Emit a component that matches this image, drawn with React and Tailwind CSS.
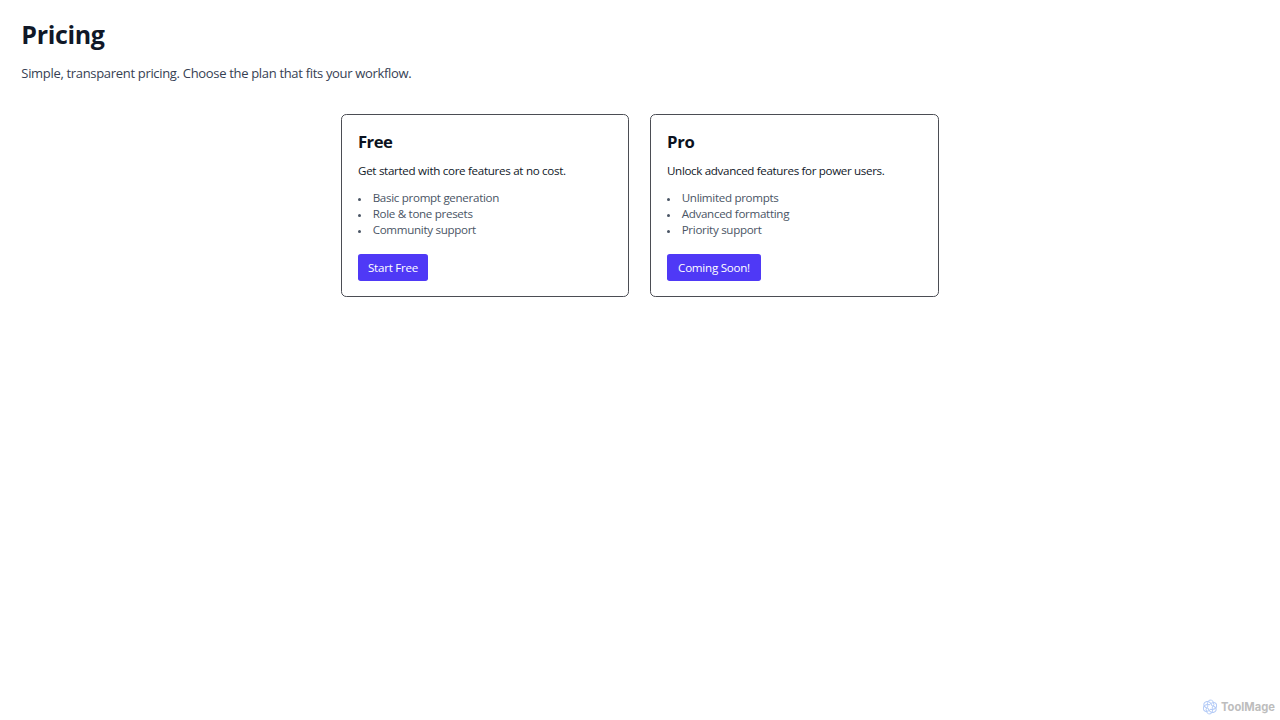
const plans = [
  {
    name: "Free",
    nameClass: "tracking-[-0.55px]",
    textClass: "tracking-[-0.3px]",
    description: "Get started with core features at no cost.",
    features: ["Basic prompt generation", "Role & tone presets", "Community support"],
    action: "Start Free",
    width: "w-[70px]",
  },
  {
    name: "Pro",
    nameClass: "tracking-[-0.3px]",
    textClass: "tracking-[-0.34px]",
    description: "Unlock advanced features for power users.",
    features: ["Unlimited prompts", "Advanced formatting", "Priority support"],
    action: "Coming Soon!",
    width: "w-[94px]",
  },
];

function PlanCard({ plan }) {
  return (
    <section className="flex h-[183px] flex-col items-start rounded-[5.33px] border border-[#4b4d54] px-4 pt-4">
      <h2 className={"h-[21px] text-[16.7px] leading-[22px] font-bold text-[#0b1220] " + plan.nameClass}>{plan.name}</h2>
      <p className={"mt-[11px] h-4 text-[11.6px] leading-4 whitespace-nowrap text-[#101828] " + plan.textClass}>{plan.description}</p>
      <ul className="mt-[11px] text-[11.6px] leading-4 tracking-[-0.31px] text-[#4a5565]">
        {plan.features.map((feature) => (
          <li key={feature} className="flex h-4 items-center whitespace-nowrap">
            <span className="mt-[3px] mr-[11.7px] h-[3px] w-[3px] rounded-full bg-[#4a5565]" />
            {feature}
          </li>
        ))}
      </ul>
      <button className={"mt-4 flex h-[26.67px] items-center justify-center rounded-[2.67px] bg-[#4f39f6] text-[11.6px] leading-4 tracking-[-0.25px] whitespace-nowrap text-white " + plan.width}>
        {plan.action}
      </button>
    </section>
  );
}

function Logo() {
  return (
    <svg viewBox="0 0 16 16" className="h-4 w-4" fill="none" stroke="#b4cbf7" strokeWidth="1">
      {[0, 60, 120, 180, 240, 300].map((angle) => (
        <path key={angle} d="M5.2 3.1 Q8 -.6 11 2.3 Q13.4 5.2 9.9 9.2 M8 5.4 Q9 3.6 11.3 3.7" transform={`rotate(${angle} 8 8)`} />
      ))}
    </svg>
  );
}

export default function App() {
  return (
    <div className="flex h-screen flex-col bg-white font-['Open_Sans','Noto_Sans',sans-serif]">
      <main className="grow px-[21.33px] pt-[21.33px]">
        <h1 className="h-[27px] text-[25px] leading-[27px] font-bold tracking-[-0.35px] text-[#101828]">Pricing</h1>
        <p className="mt-4 h-[18px] text-[13px] leading-[18px] tracking-[-0.32px] whitespace-nowrap text-[#364153]">
          Simple, transparent pricing. Choose the plan that fits your workflow.
        </p>
        <div className="mx-auto mt-8 grid w-[598px] grid-cols-[288px_289px] gap-[21px]">
          {plans.map((plan) => (
            <PlanCard key={plan.name} plan={plan} />
          ))}
        </div>
      </main>
      <footer className="flex h-[26px] items-center justify-end gap-[3px] pr-[5px]">
        <Logo />
        <span className="font-['Inter',sans-serif] text-[11.2px] leading-4 font-bold text-[#bdbdbd]">ToolMage</span>
      </footer>
    </div>
  );
}
